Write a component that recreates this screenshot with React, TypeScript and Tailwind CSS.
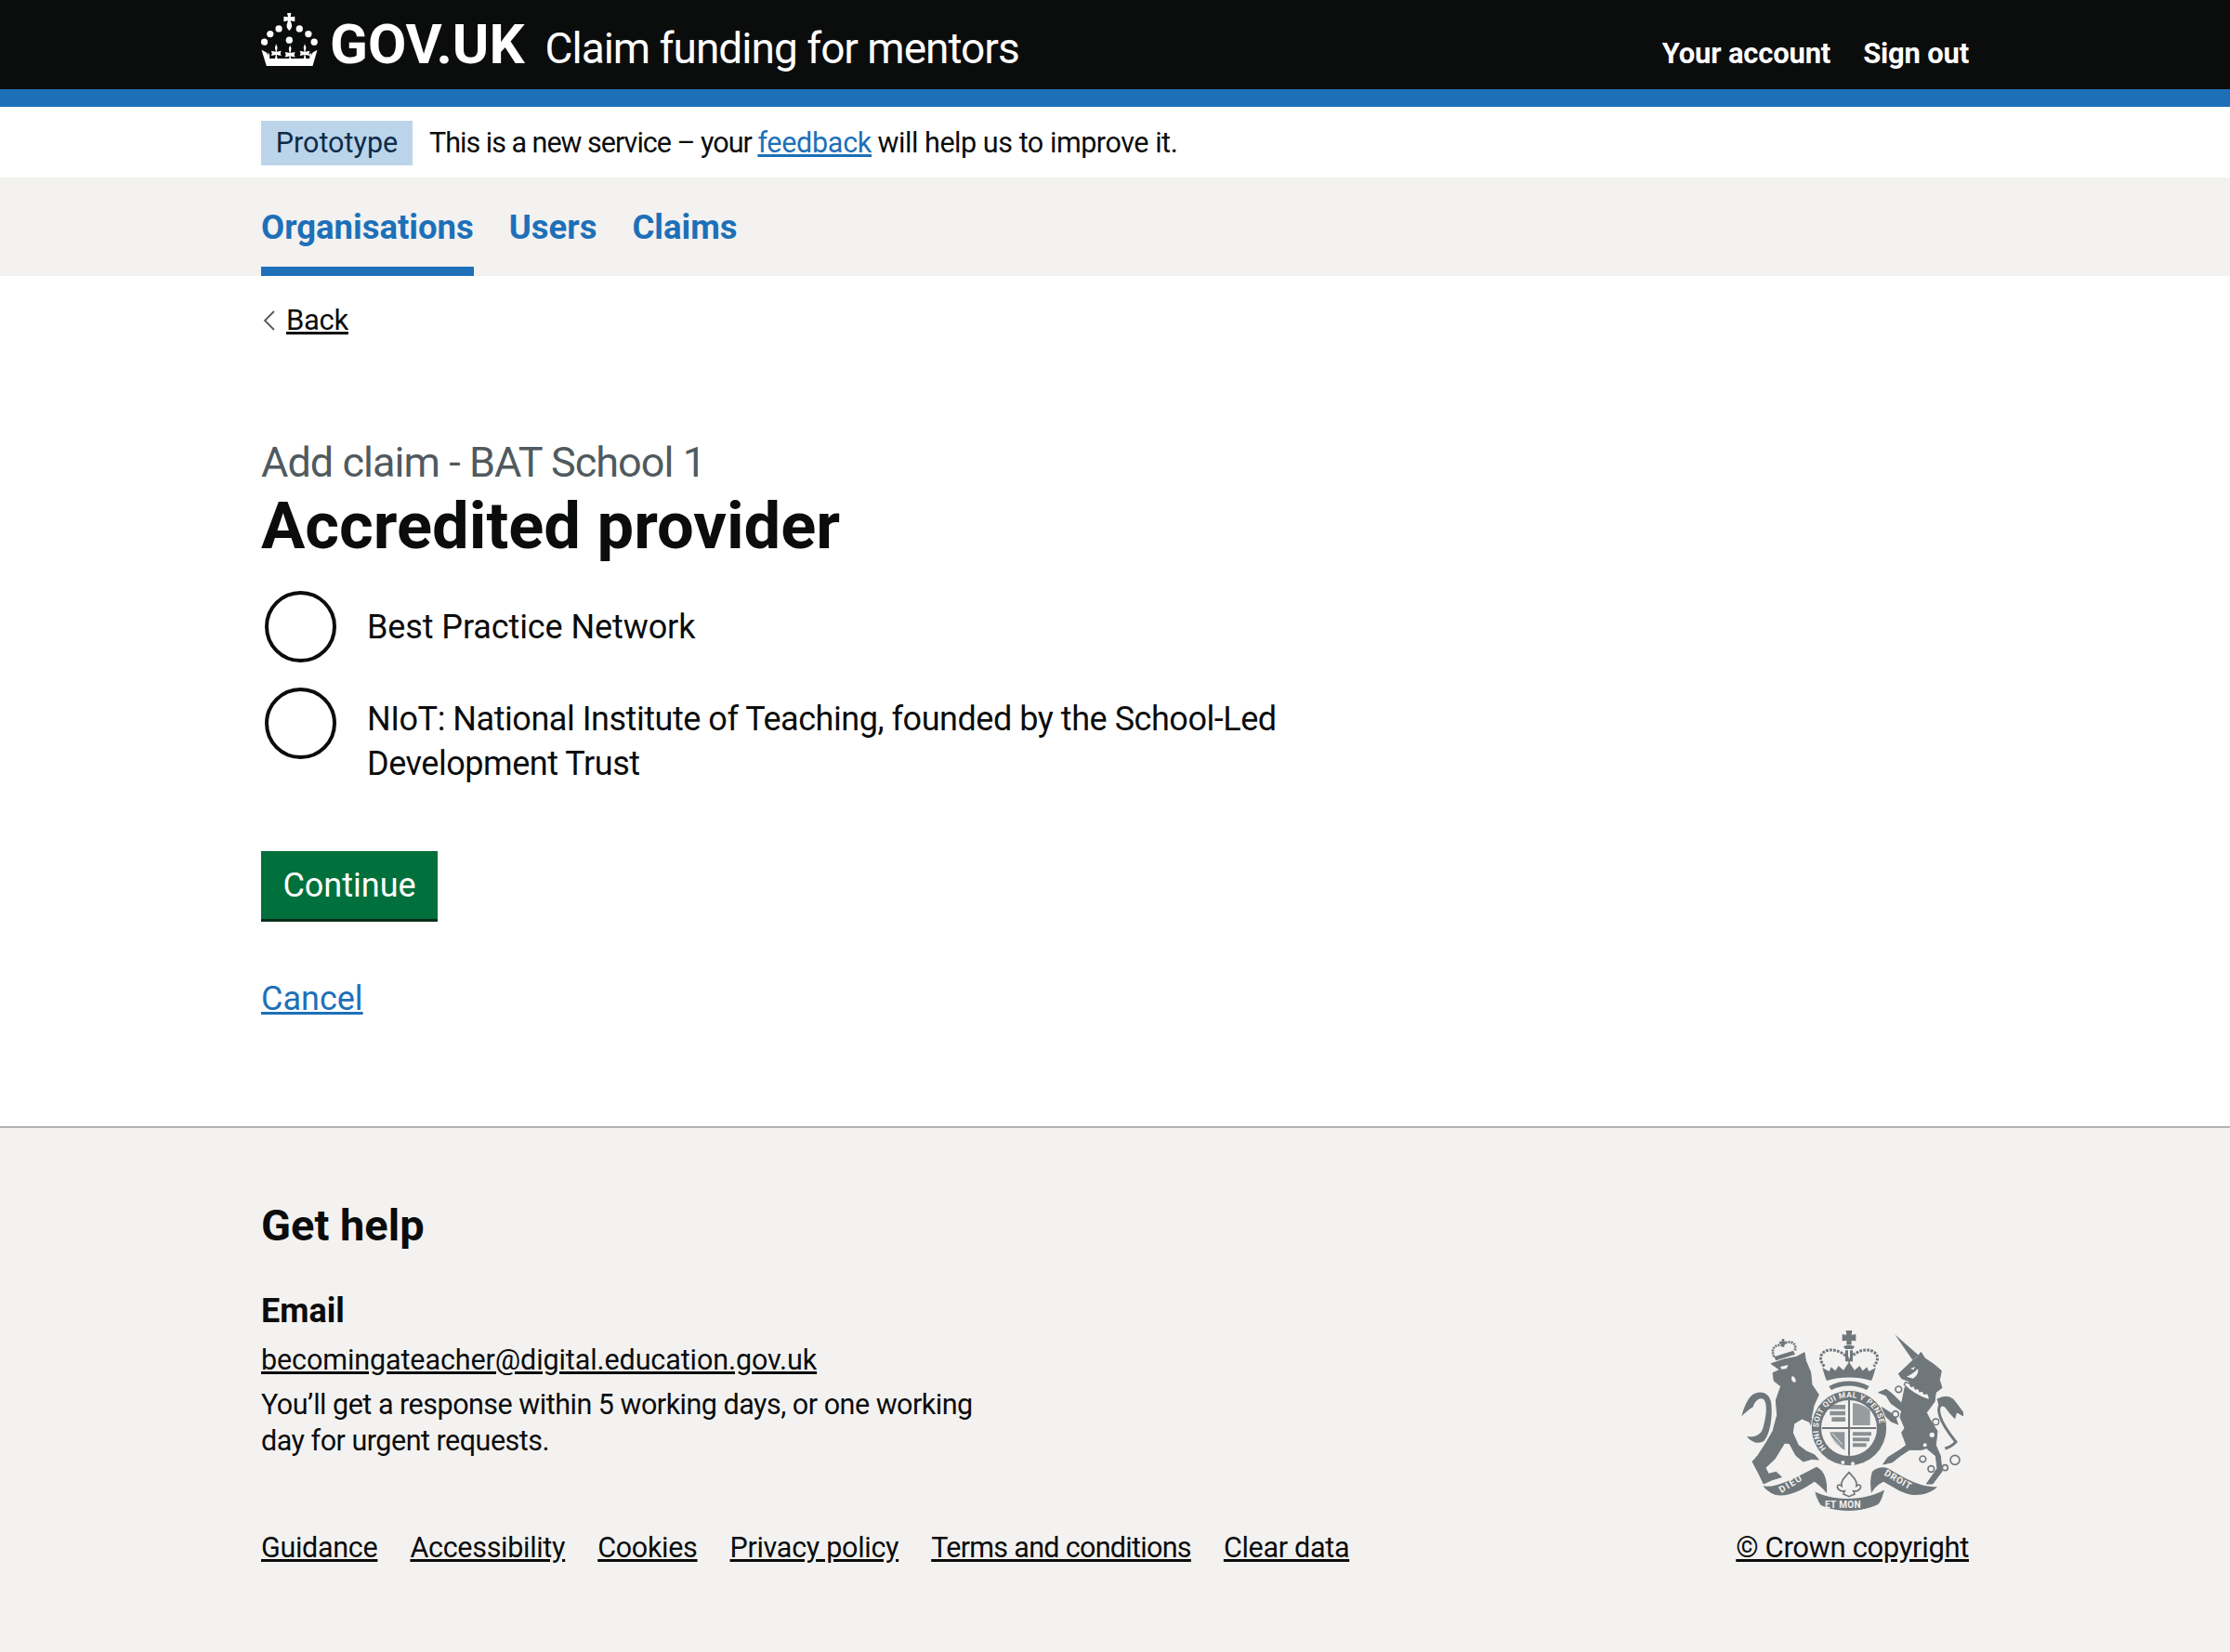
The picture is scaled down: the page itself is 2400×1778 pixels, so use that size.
const font = "font-['Roboto',sans-serif]";
const ARMS = "#6f777b";
const BG = "#f3f2f1";
const fleur = "M0 138c5 6 7 12 4 20l-1 6 15-3-3 8 3 8-15-3 3 16H-3l3-16-15 3 3-8-3-8 15 3-1-6c-3-8-1-14 4-20z";

function Crown() {
  return (
    <svg viewBox="64 40 181 172" className="w-[61px] h-[57px] shrink-0 mb-[12px]" fill="#ffffff">
      {/* cross and orb */}
      <path d="M147 40h13l-2 13 14-2v17l-14-3 3 9c3 7 2 16-7 23-9-7-10-16-7-23l3-9-14 3V51l14 2z" />
      <circle cx="120" cy="91" r="11" />
      <circle cx="187" cy="91" r="11" />
      <circle cx="92" cy="108" r="11" />
      <circle cx="216" cy="108" r="11" />
      <circle cx="73" cy="134" r="11" />
      <circle cx="235" cy="134" r="11" />
      <circle cx="154" cy="128" r="11" />
      {/* band with the three crosses */}
      <path d="M64 160l16 8 10 20h130l10-20 15-8-15 52H80z" />
      <path d="M84 168l6 6v14h-4zM226 168l-6 6v14h4z" />
      <path d={fleur} transform="translate(110 2) " />
      <path d={fleur} transform="translate(155 6)" />
      <path d={fleur} transform="translate(203 2)" />
    </svg>
  );
}

function RoyalArms() {
  return (
    <svg viewBox="9 9 720 591" className="w-[240px] h-[197px] mr-[6px]" fill={ARMS}>
      {/* lion tail */}
      <path d="M30 356C50 362 75 355 82 330C92 295 98 255 85 238C70 228 55 245 50 262C40 268 25 280 13 292C20 265 30 240 45 225C65 208 100 210 108 245C115 290 105 350 85 372C70 382 45 378 30 356Z" />
      {/* lion */}
      <path
        strokeLinejoin="round"
        stroke={ARMS}
        strokeWidth="3"
        d="M108 122L150 108L190 100L216 86L220 112L236 150L240 190L262 222L246 258L238 296L258 318L276 345L268 362L250 345L232 310L208 300L182 316L178 345L196 385L222 405L248 416L262 432L240 430L212 438L188 418L168 380L152 378L120 430L90 458L100 478L125 472L142 488L110 498L84 510L70 480L48 438L66 418L92 378L114 340L128 288L124 240L140 195L118 178L114 152L136 142Z"
      />
      <path d="M138 132l26-6-6 12-16 2zM176 162c8 2 14 10 11 20-10 2-16-10-11-20z" fill={BG} />
      {/* lion crown */}
      <path d="M118 100C105 70 125 60 145 62C160 45 195 50 185 80" fill="none" stroke={ARMS} strokeWidth="8" strokeDasharray="6 3" />
      <path d="M118 100L180 80L186 92L124 112z" />
      <path d="M143 42h8v8h8v8h-8v10h-8V58h-8v-8h8z" />

      {/* unicorn */}
      <g transform="translate(360 0)">
        <path d="M148 28L225 95L205 110z" />
        <path
          strokeLinejoin="round"
          stroke={ARMS}
          strokeWidth="3"
          d="M205 112L222 100L232 85L245 105L275 125L298 145L292 175L300 200L280 215L276 245L250 280L260 300L285 340L280 385L295 420L300 470L270 510L250 510L285 460L280 420L250 395L235 400L195 400L165 420L140 440L110 447L125 425L165 400L185 385L170 345L180 330L165 295L170 275L135 250L120 225L95 215L120 205L140 220L170 250L180 200L196 180L170 170L160 155z"
        />
        <path d="M105 260L150 290L160 320L135 310L110 285z" />
        <path d="M186 164c14-6 26-14 36-26 4 12-4 26-16 32z" fill={BG} />
        <path d="M198 138l16-6-6 10z" fill={BG} />
        {/* collar */}
        <path d="M182 182l14 4 4 10 10-2 4 10 10-2 4 10 10-2 4 10 12-2 4 10 2 12c-30-10-62-28-82-50z" fill={BG} stroke={ARMS} strokeWidth="4" />
        <path d="M285 240C300 232 320 228 332 238C345 252 358 272 370 288C358 282 350 276 345 270C345 278 342 285 340 292C330 282 322 272 315 262C306 252 292 252 290 268C288 290 305 325 345 375C335 385 325 392 310 396" fill="none" stroke={ARMS} strokeWidth="9" />
        <path d="M285 238C300 230 322 226 334 238C348 252 358 272 370 288C358 282 350 276 345 270C345 278 342 285 340 292C330 282 322 272 315 262C306 254 296 254 290 262z" />
        <circle cx="160" cy="205" r="10" fill={BG} stroke={ARMS} strokeWidth="5" />
        <circle cx="150" cy="285" r="10" fill={BG} stroke={ARMS} strokeWidth="5" />
        <circle cx="238" cy="430" r="10" fill="none" stroke={ARMS} strokeWidth="5" />
        <circle cx="265" cy="462" r="10" fill="none" stroke={ARMS} strokeWidth="5" />
        <circle cx="310" cy="458" r="9" fill="none" stroke={ARMS} strokeWidth="5" />
        <circle cx="342" cy="433" r="15" fill="none" stroke={ARMS} strokeWidth="5" />
        <circle cx="280" cy="310" r="10" fill={BG} stroke={ARMS} strokeWidth="4" />
        <circle cx="268" cy="352" r="8" fill={BG} />
        <circle cx="245" cy="385" r="6" fill={BG} />
      </g>

      {/* centre: crown, garter, motto */}
      <g transform="translate(-90 -45)">
        <path d="M378 222c-6-12-10-28-14-42l22 12 6-14 14 12 10-16 16 14 18-26 18 26 16-14 10 16 14-12 6 14 22-12c-4 14-8 30-14 42-44-14-100-14-144 0z" />
        <path d="M385 240c40-22 90-22 130 0l-8 12c-34-18-80-18-114 0z" />
        <path d="M370 176c-34-42 14-66 52-46 12 6 22 14 28 26 6-12 16-20 28-26 38-20 86 4 52 46" fill="none" stroke={ARMS} strokeWidth="9" strokeDasharray="8 4" />
        <path d="M440 60h20l-2 14 14-2v22l-14-2v14h-16V92l-14 2V72l14 2z" />
        <path d="M432 112c10-6 26-6 36 0l-6 8h-24zM438 124h9v36h-9zM453 124h9v36h-9z" />

        <circle cx="450" cy="375" r="122" stroke={BG} strokeWidth="3" />
        <circle cx="450" cy="375" r="90" fill={BG} />
        <path d="M447 284h6v180h-6zM362 372h176v6H362z" />
        {/* quarters */}
        <path d="M382 300h56v14h-56zM388 320h50v14h-50zM394 340h44v14h-44z" opacity="0.8" />
        <path d="M462 294c22 2 42 10 56 24v48h-56z" opacity="0.7" />
        <path d="M462 388h60v12h-60zM462 406h54v12h-54zM462 424h44v12h-44z" opacity="0.8" />
        <path d="M388 388h48v58c-22-12-42-30-48-58z" opacity="0.75" />
        <path d="M396 392l32 36M392 404l30 32" stroke={BG} strokeWidth="3" fill="none" />

        <path id="garter" d="M378 443A99 99 0 1 1 522 443" fill="none" />
        <text fontFamily="Roboto, sans-serif" fontSize="25" fontWeight="700" fill={BG} letterSpacing="1.5">
          <textPath href="#garter" startOffset="3">HONI SOIT QUI MAL Y PENSE</textPath>
        </text>
        <circle cx="430" cy="486" r="6" fill={BG} />
        <circle cx="462" cy="490" r="6" fill={BG} />

        <path d="M172 562C210 570 270 540 345 500C370 510 382 545 378 585C370 575 350 555 338 548C300 575 250 600 210 590C195 585 180 572 172 562Z" />
        <path d="M525 515C545 500 560 500 575 505C620 530 670 565 735 565C715 585 680 595 650 590C620 585 590 565 562 548C545 555 530 570 522 585C518 560 518 535 525 515Z" />
        <path d="M338 578C400 610 500 610 566 572C560 595 555 610 545 622C490 650 410 650 358 625C348 610 342 595 338 578Z" stroke={BG} strokeWidth="3" />
        <path d="M450 518c-14 16-28 28-24 44-8-6-14-4-14 4 4 10 14 14 24 12l-4 10 18 8 18-8-4-10c10 2 20-2 24-12 0-8-6-10-14-4 4-16-10-28-24-44z" fill={BG} stroke={ARMS} strokeWidth="5" />
        <g fontFamily="Roboto, sans-serif" fontSize="30" fontWeight="700" fill={BG}>
          <text x="232" y="585" transform="rotate(-32 232 585)" letterSpacing="5">DIEU</text>
          <text x="372" y="634" letterSpacing="1">ET MON</text>
          <text x="562" y="526" transform="rotate(30 562 526)" letterSpacing="2">DROIT</text>
        </g>
      </g>
    </svg>
  );
}

export default function App() {
  return (
    <div className={`min-h-[1778px] flex flex-col bg-white text-[#0b0c0c] ${font}`}>
      <header className="h-[115px] bg-[#0b0c0c] border-b-[19px] border-[#1d70b8] text-white">
        <div className="w-[1838px] mx-auto h-full flex items-center">
          <Crown />
          <span className="ml-[13px] text-[60px] font-bold leading-none">GOV.UK</span>
          <span className="ml-[22px] text-[46px] tracking-[-1px] leading-none mt-[8px]">Claim funding for mentors</span>
          <nav className="ml-auto flex gap-[35px] text-[31px] tracking-[-0.2px] font-bold mt-[21px]">
            <a>Your account</a>
            <a>Sign out</a>
          </nav>
        </div>
      </header>

      <div className="h-[76px] bg-white">
        <div className="w-[1838px] mx-auto h-full flex items-center pt-[2px] text-[30.5px]">
          <span className="h-[48px] w-[163px] flex items-center justify-center bg-[#bbd4ea] text-[#0c2d4a]">Prototype</span>
          <span className="ml-[18px] tracking-[-1px]">
            This is a new service – your <a className="tracking-[-0.3px] text-[#1d70b8] underline">feedback</a>{" "}
            <span className="tracking-[-0.45px]">will help us to improve it.</span>
          </span>
        </div>
      </div>

      <div className="h-[106px] bg-[#f3f2f1]">
        <nav className="w-[1838px] mx-auto h-full flex gap-[38px] text-[36.5px] font-bold text-[#1d70b8]">
          <a className="h-full pt-[27px] border-b-[10px] border-[#1d70b8]">Organisations</a>
          <a className="h-full pt-[27px]">Users</a>
          <a className="h-full pt-[27px]">Claims</a>
        </nav>
      </div>

      <main className="w-[1838px] mx-auto flex-1">
        <a className="mt-[28px] flex items-center gap-[11px] text-[31px] tracking-[-0.3px] leading-[40px]">
          <svg viewBox="0 0 14 22" className="w-[14px] h-[22px] ml-[2px]" fill="none" stroke="#505a5f" strokeWidth="1.8">
            <path d="M12 1 2 11l10 10" />
          </svg>
          <span className="underline">Back</span>
        </a>
        <p className="mt-[108px] text-[45px] tracking-[-0.95px] leading-[50px] text-[#505a5f]">Add claim - BAT School 1</p>
        <h1 className="mt-[3px] text-[70.5px] leading-[80px] font-bold">Accredited provider</h1>

        <div className="mt-[30px] flex flex-col gap-[27px]">
          <label className="flex items-start gap-[33px] h-[77px]">
            <span className="ml-[4px] w-[77px] h-[77px] rounded-full border-[4px] border-[#0b0c0c] shrink-0" />
            <span className="text-[36px] tracking-[-0.1px] leading-[48px] pt-[15px]">Best Practice Network</span>
          </label>
          <label className="flex items-start gap-[33px]">
            <span className="ml-[4px] w-[77px] h-[77px] rounded-full border-[4px] border-[#0b0c0c] shrink-0" />
            <span className="w-[1060px] text-[36px] tracking-[-0.46px] leading-[48px] pt-[10px]">
              NIoT: National Institute of Teaching, founded by the School-Led Development Trust
            </span>
          </label>
        </div>

        <button className="mt-[70px] block w-[190px] h-[73px] pt-[1px] bg-[#00703c] text-white text-[36px] shadow-[0_3px_0_#002d18]">Continue</button>
        <a className="mt-[62px] block text-[36px] leading-[48px] text-[#1d70b8] underline">Cancel</a>
      </main>

      <footer className="h-[566px] bg-[#f3f2f1] border-t-2 border-[#b1b4b6]">
        <div className="w-[1838px] mx-auto pt-[77px] flex justify-between">
          <div>
            <h2 className="text-[47px] leading-[56px] font-bold">Get help</h2>
            <h3 className="mt-[40px] text-[36px] leading-[48px] font-bold">Email</h3>
            <a className="mt-[9px] block text-[30.5px] tracking-[-0.1px] leading-[40px] underline">becomingateacher@digital.education.gov.uk</a>
            <p className="mt-[8px] w-[790px] text-[30.5px] tracking-[-0.5px] leading-[39px]">You’ll get a response within 5 working days, or one working day for urgent requests.</p>
            <ul className="mt-[76px] flex gap-[35px] text-[30.5px] tracking-[-0.3px] leading-[40px] underline">
              <li>Guidance</li>
              <li>Accessibility</li>
              <li>Cookies</li>
              <li>Privacy policy</li>
              <li className="tracking-[-0.7px]">Terms and conditions</li>
              <li>Clear data</li>
            </ul>
          </div>
          <div className="flex flex-col items-end justify-end">
            <RoyalArms />
            <a className="mt-[19px] text-[31px] tracking-[-0.35px] leading-[40px] underline">© Crown copyright</a>
          </div>
        </div>
      </footer>
    </div>
  );
}
